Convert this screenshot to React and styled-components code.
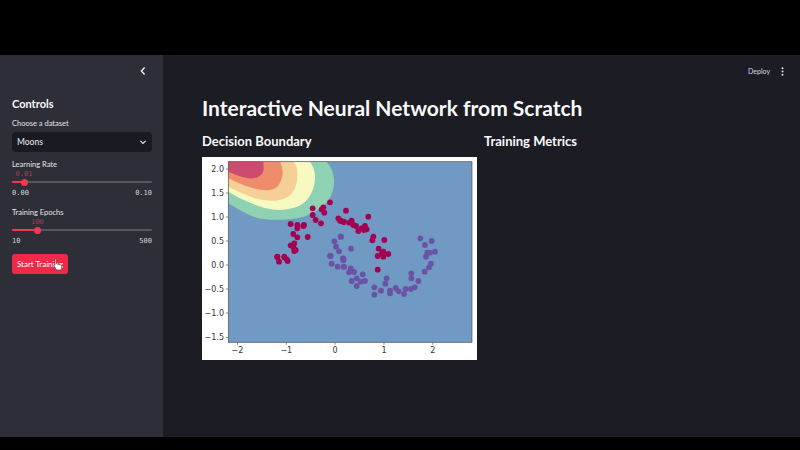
import React from "react";
import styled, { createGlobalStyle } from "styled-components";

const Global = createGlobalStyle`
  html, body { margin: 0; padding: 0; background: #000; }
  body { font-family: "Lato", "Noto Sans", sans-serif; }
  * { box-sizing: border-box; }
`;
const Frame = styled.div`
  width: 800px; height: 450px; background: #000;
  display: flex; flex-direction: column; overflow: hidden;
  padding: 55px 0 13px;
`;
const Shell = styled.div`flex: 1; display: flex; min-height: 0;`;
const Sidebar = styled.aside`
  width: 163px; flex: none; background: #2d2e37; color: #f2f2f4;
  padding: 0 11px 0 12px; display: flex; flex-direction: column;
`;
const Collapse = styled.div`height: 32px; display: flex; justify-content: flex-end; align-items: center; padding-right: 5px;`;
const SideTitle = styled.h3`margin: 10px 0 0; font-size: 11px; font-weight: 700; line-height: 14px; color: #fafafa;`;
const FieldLabel = styled.div`font-size: 7.5px; line-height: 10px; color: #e6e6ea; margin-top: ${p => p.$top || 0}px;`;
const Select = styled.div`
  margin-top: 3px; height: 20px; background: #1a1b22; border-radius: 4px;
  display: flex; align-items: center; justify-content: space-between;
  padding: 0 5px; font-size: 8.5px; color: #ececf0;
`;
const SliderWrap = styled.div`margin-top: ${p => p.$top}px;`;
const SliderArea = styled.div`position: relative; height: 18px;`;
const Track = styled.div`position: absolute; left: 0; right: 0; top: 11px; height: 2px; background: #55565e; border-radius: 1px;`;
const Fill = styled.div`height: 100%; background: #f03a50; border-radius: 1px;`;
const Thumb = styled.div`position: absolute; top: -2.5px; width: 7px; height: 7px; margin-left: -3.5px; border-radius: 50%; background: #f03a50;`;
const Value = styled.div`
  position: absolute; top: 0; transform: translateX(-50%);
  font-family: "DejaVu Sans Mono", monospace; font-size: 7px; line-height: 9px; color: #b83550;
`;
const Range = styled.div`
  display: flex; justify-content: space-between; margin-top: 1px;
  font-family: "DejaVu Sans Mono", monospace; font-size: 7px; line-height: 9px; color: #d4d4d8;
`;
const Button = styled.button`
  margin-top: 8px; width: 56px; height: 20px; border: 0; border-radius: 3px;
  background: #ee2a48; color: #fff; font: 400 8px "Lato", sans-serif; padding: 0; position: relative;
`;
const Pointer = styled.svg`position: absolute; left: 41px; top: 4px;`;
const Main = styled.main`flex: 1; background: #1b1c24; color: #fafafa; display: flex; flex-direction: column; padding: 0 0 0 39px;`;
const TopBar = styled.div`height: 32px; display: flex; justify-content: flex-end; align-items: center; gap: 11px; padding-right: 16px; font-size: 7px; color: #dcdce0;`;
const Dots = styled.svg`display: block;`;
const Title = styled.h1`margin: 8px 0 0; font-size: 21px; line-height: 26px; font-weight: 700;`;
const Columns = styled.div`display: grid; grid-template-columns: 282px 1fr; margin-top: 11px;`;
const Heading = styled.h2`margin: 0; font-size: 13px; line-height: 19px; font-weight: 700;`;
const Plot = styled.svg`display: block; margin-top: 6px;`;

const red = [[405,157],[353,175],[385,172],[380,178],[388,188],[353,195],[362,210],[378,220],[430,205],[437,212],[445,215],[287,222],[307,225],[307,235],[325,228],[327,225],[295,252],[307,262],[338,261],[298,280],[287,286],[295,292],[302,300],[247,321],[268,322]].map(([x,y])=>[195+x/3,150+y/3])
  .concat([[18,182],[85,200],[0,212],[12,216],[28,218],[35,212],[40,225],[48,228],[75,228],[65,235],[55,243],[72,240],[80,238],[100,260],[97,271],[133,270],[116,296],[130,305],[125,312],[113,318],[130,320],[145,312]].map(([x,y])=>[340+x/3,150+y/3]))
  .concat([[247,20],[252,35],[268,20],[275,28],[278,33],[298,3]].map(([x,y])=>[195+x/3,250+y/3]))
  .concat([[377.7,269.7]]);
const purple = [[3,260],[33,296],[241,265],[275,273],[255,285],[285,305],[262,308],[270,308],[258,320],[10,326]].map(([x,y])=>[340+x/3,150+y/3])
  .concat([[418,274],[437,260],[423,290],[432,304],[405,318],[444,325]].map(([x,y])=>[195+x/3,150+y/3]))
  .concat([[407,18],[410,41],[428,50],[445,29],[446,50]].map(([x,y])=>[195+x/3,250+y/3]))
  .concat([[10,30],[12,50],[32,55],[27,67],[42,66],[68,73],[50,85],[35,93],[50,108],[62,95],[75,93],[140,85],[136,101],[103,112],[123,122],[103,134],[150,122],[150,130],[167,114],[176,124],[192,132],[197,117],[213,117],[224,112],[214,85],[214,70],[235,93],[254,65],[267,52],[273,41]].map(([x,y])=>[340+x/3,250+y/3]));

const z = pts => {
  const p = pts.map(([x,y])=>[195+x/3,150+y/3]);
  let d = `M228.3 161.7 L${p[0][0]} ${p[0][1]}`;
  for (let i=1;i<p.length;i++) {
    const [a,b] = p[i-1], [c,e] = p[i];
    d += ` Q${a} ${b} ${(a+c)/2} ${(b+e)/2}`;
  }
  const l = p[p.length-1];
  return d + ` L${l[0]} ${l[1]} Z`;
};
const green = z([[100,160],[125,175],[180,205],[240,210],[310,207],[365,185],[405,150],[420,100],[412,60],[395,35]]);
const cream = z([[100,125],[140,148],[205,175],[262,182],[320,168],[352,130],[362,85],[355,50],[345,35]]);
const tan = z([[100,110],[150,135],[200,152],[255,153],[295,132],[308,90],[307,50],[295,35]]);
const orange = z([[100,85],[150,108],[205,123],[245,117],[262,85],[264,60],[255,35]]);
const pink = z([[100,65],[140,82],[180,88],[207,68],[205,35]]);

const xt = [[-2,237.5],[-1,286.3],[0,335],[1,384],[2,432.8]];
const yt = [["2.0",169],["1.5",193],["1.0",217],["0.5",241],["0.0",265],["−0.5",289],["−1.0",313],["−1.5",337.5]];

function BoundaryPlot() {
  return (
    <Plot width="275" height="203" viewBox="202 157 275 203">
      <rect x="202" y="157" width="275" height="203" fill="#fff" />
      <rect x="228.3" y="161.7" width="243.7" height="180.6" fill="#7099c3" />
      <path d={green} fill="#8fd1b3" />
      <path d={cream} fill="#f6fac0" />
      <path d={tan} fill="#f5cf95" />
      <path d={orange} fill="#ee8d6b" />
      <path d={pink} fill="#cd4a70" />
      {red.map(([x,y],i)=><circle key={i} cx={x} cy={y} r="2.9" fill="#a20250" />)}
      {purple.map(([x,y],i)=><circle key={i} cx={x} cy={y} r="2.9" fill="#6a53a6" />)}
      <rect x="228.3" y="161.7" width="243.7" height="180.6" fill="none" stroke="#555" strokeWidth=".7" />
      {xt.map(([v,x])=>(
        <g key={v}>
          <line x1={x} x2={x} y1="342.3" y2="344.8" stroke="#444" strokeWidth=".6" />
          <text x={x} y="353" textAnchor="middle" fontFamily="DejaVu Sans" fontSize="8" fill="#333">{v<0?`−${-v}`:v}</text>
        </g>
      ))}
      {yt.map(([v,y])=>(
        <g key={v}>
          <line x1="225.8" x2="228.3" y1={y} y2={y} stroke="#444" strokeWidth=".6" />
          <text x="224" y={y+2.8} textAnchor="end" fontFamily="DejaVu Sans" fontSize="8" fill="#333">{v}</text>
        </g>
      ))}
    </Plot>
  );
}

function Slider({ top, label, value, valueAt, thumb, min, max }) {
  return (
    <SliderWrap $top={top}>
      <FieldLabel>{label}</FieldLabel>
      <SliderArea>
        <Value style={{ left: valueAt }}>{value}</Value>
        <Track>
          <Fill style={{ width: thumb }} />
          <Thumb style={{ left: thumb }} />
        </Track>
      </SliderArea>
      <Range><span>{min}</span><span>{max}</span></Range>
    </SliderWrap>
  );
}

export default function App() {
  return (
    <Frame>
      <Global />
      <Shell>
        <Sidebar>
          <Collapse>
            <svg width="8" height="10" viewBox="0 0 8 10"><path d="M5.6 1.6 2.4 5l3.2 3.4" fill="none" stroke="#f0f0f2" strokeWidth="1.4" /></svg>
          </Collapse>
          <SideTitle>Controls</SideTitle>
          <FieldLabel $top={8}>Choose a dataset</FieldLabel>
          <Select>
            <span>Moons</span>
            <svg width="8" height="8" viewBox="0 0 8 8"><path d="M1.4 2.8 4 5.4l2.6-2.6" fill="none" stroke="#e8e8ea" strokeWidth="1.2" /></svg>
          </Select>
          <Slider top={8} label="Learning Rate" value="0.01" valueAt={12} thumb={12.5} min="0.00" max="0.10" />
          <Slider top={10} label="Training Epochs" value="100" valueAt={25.5} thumb={25.5} min="10" max="500" />
          <Button>
            Start Training
            <Pointer width="10" height="13" viewBox="0 0 10 13">
              <path d="M2.4.8c.7 0 1 .5 1 1v4l3.6.9c1.2.3 1.8 1 1.7 2.1L8.2 12H3.6L1 8c-.5-.8.4-1.5 1-.9V1.8c0-.6-.2-1 .4-1Z" fill="#fff" stroke="#333" strokeWidth=".6" />
            </Pointer>
          </Button>
        </Sidebar>
        <Main>
          <TopBar>
            <span>Deploy</span>
            <Dots width="3" height="9" viewBox="0 0 3 9"><circle cx="1.5" cy="1.3" r="1" fill="#e4e4e8" /><circle cx="1.5" cy="4.5" r="1" fill="#e4e4e8" /><circle cx="1.5" cy="7.7" r="1" fill="#e4e4e8" /></Dots>
          </TopBar>
          <Title>Interactive Neural Network from Scratch</Title>
          <Columns>
            <div>
              <Heading>Decision Boundary</Heading>
              <BoundaryPlot />
            </div>
            <div>
              <Heading>Training Metrics</Heading>
            </div>
          </Columns>
        </Main>
      </Shell>
    </Frame>
  );
}
